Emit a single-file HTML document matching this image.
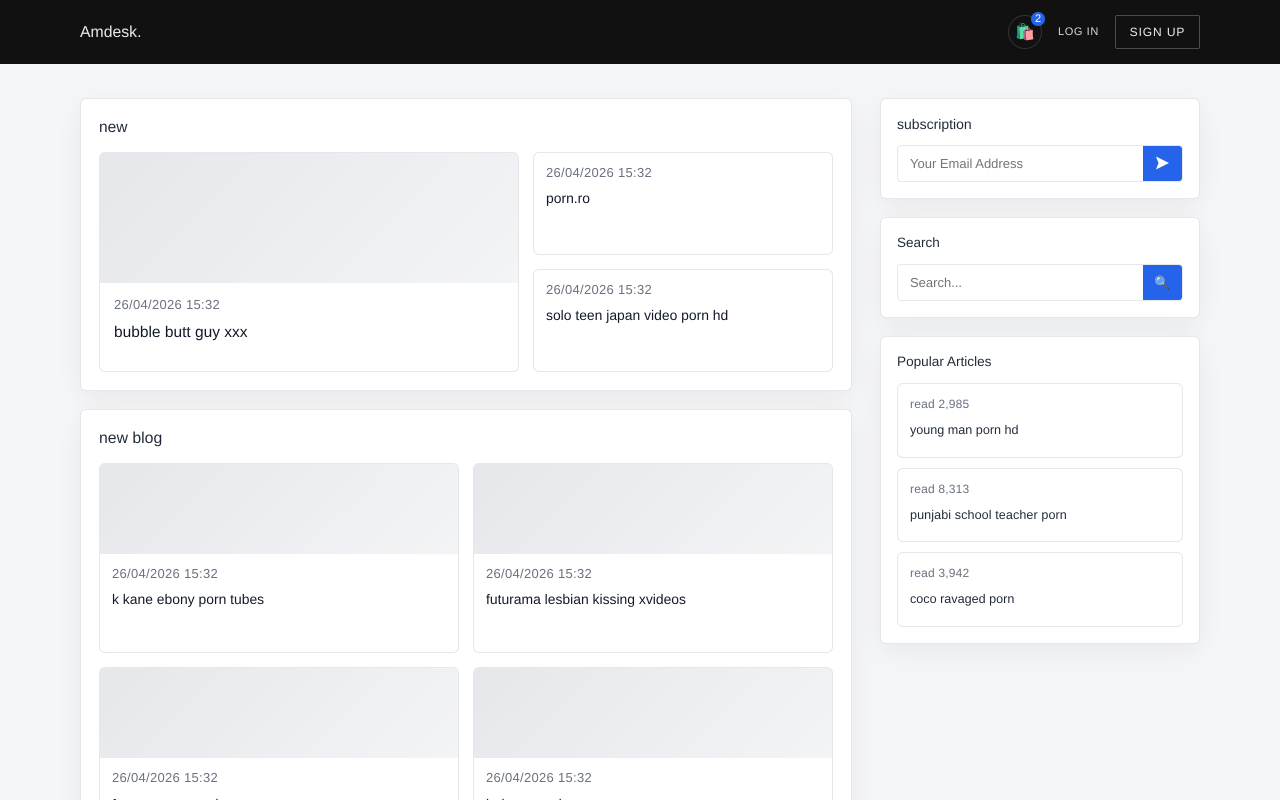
<!DOCTYPE html>
<html lang="en">
<head>
<meta charset="utf-8">
<title>Amdesk.</title>
<style>
*{box-sizing:border-box;margin:0;padding:0}
html,body{width:1280px;height:800px;overflow:hidden;background:#f5f6f8}
body{font-family:"Liberation Sans",Arial,sans-serif;color:#111827;position:relative;text-rendering:geometricPrecision}
.abs{position:absolute}
header{position:absolute;left:0;top:0;width:1280px;height:64px;background:#111}
.t{position:absolute;white-space:nowrap}
.card{position:absolute;background:#fff;border:1px solid #e5e7eb;border-radius:6px;box-shadow:0 8px 28px rgba(17,24,39,.06)}
.item{position:absolute;background:#fff;border:1px solid #e5e7eb;border-radius:6px;overflow:hidden}
.img{position:absolute;left:0;top:0;width:100%;background:linear-gradient(135deg,#e5e7eb,#f3f4f6)}
.d{font-size:13px;line-height:16px;color:#6b7280;letter-spacing:.3px}
.h{font-size:13.900px;line-height:18px;color:#111827}
.r{font-size:12px;line-height:16px;color:#6b7280;letter-spacing:.2px}
.p{font-size:12.600px;line-height:16px;color:#1f2937}
.input{position:absolute;background:#fff;border:1px solid #e5e7eb;border-radius:4px;overflow:hidden}
.input span.ph{position:absolute;left:12px;top:10px;font-size:13px;line-height:16px;color:#757575;white-space:nowrap}
.btn{position:absolute;right:0;top:0;width:39px;height:35px;background:#2563eb}
</style>
</head>
<body>
<header>
  <div class="t" style="left:80px;top:23px;font-size:15.800px;line-height:20px;color:#e5e7eb">Amdesk.</div>
  <div class="abs" style="left:1008px;top:15px;width:34px;height:34px;border:1px solid #333;border-radius:50%;text-align:center;font-size:16px;line-height:34px">🛍️</div>
  <div class="abs" style="left:1031px;top:12px;width:14px;height:14px;border-radius:50%;background:#2563eb;color:#fff;font-size:11px;line-height:14px;text-align:center">2</div>
  <div class="t" style="left:1058px;top:25px;font-size:11px;line-height:14px;letter-spacing:.6px;color:#d1d5db">LOG IN</div>
  <div class="abs" style="left:1115px;top:15px;width:85px;height:34px;border:1px solid #4b4b4b;border-radius:2px;color:#e5e7eb;font-size:12px;line-height:32px;text-align:center;letter-spacing:.9px">SIGN UP</div>
</header>

<div class="card" style="left:80px;top:98px;width:772px;height:293px">
  <div class="t" style="left:18px;top:20px;font-size:15.500px;line-height:18px;color:#1f2937">new</div>
  <div class="item" style="left:18px;top:53px;width:420px;height:220px">
    <div class="img" style="height:130px"></div>
    <div class="t d" style="left:14px;top:144px">26/04/2026 15:32</div>
    <div class="t" style="left:14px;top:170px;font-size:15.500px;line-height:20px">bubble butt guy xxx</div>
  </div>
  <div class="item" style="left:452px;top:53px;width:300px;height:103px">
    <div class="t d" style="left:12px;top:12px">26/04/2026 15:32</div>
    <div class="t h" style="left:12px;top:36px">porn.ro</div>
  </div>
  <div class="item" style="left:452px;top:170px;width:300px;height:103px">
    <div class="t d" style="left:12px;top:12px">26/04/2026 15:32</div>
    <div class="t h" style="left:12px;top:36px">solo teen japan video porn hd</div>
  </div>
</div>

<div class="card" style="left:80px;top:409px;width:772px;height:500px">
  <div class="t" style="left:18px;top:20px;font-size:15.800px;line-height:18px;color:#1f2937">new blog</div>
  <div class="item" style="left:18px;top:53px;width:360px;height:190px">
    <div class="img" style="height:90px"></div>
    <div class="t d" style="left:12px;top:102px">26/04/2026 15:32</div>
    <div class="t h" style="left:12px;top:126px">k kane ebony porn tubes</div>
  </div>
  <div class="item" style="left:392px;top:53px;width:360px;height:190px">
    <div class="img" style="height:90px"></div>
    <div class="t d" style="left:12px;top:102px">26/04/2026 15:32</div>
    <div class="t h" style="left:12px;top:126px">futurama lesbian kissing xvideos</div>
  </div>
  <div class="item" style="left:18px;top:257px;width:360px;height:190px">
    <div class="img" style="height:90px"></div>
    <div class="t d" style="left:12px;top:102px">26/04/2026 15:32</div>
    <div class="t h" style="left:12px;top:127px">free summers exit</div>
  </div>
  <div class="item" style="left:392px;top:257px;width:360px;height:190px">
    <div class="img" style="height:90px"></div>
    <div class="t d" style="left:12px;top:102px">26/04/2026 15:32</div>
    <div class="t h" style="left:12px;top:127px">baby acorn hunt</div>
  </div>
</div>

<div class="card" style="left:880px;top:98px;width:320px;height:101px">
  <div class="t" style="left:16px;top:16px;font-size:14px;line-height:18px;color:#1f2937">subscription</div>
  <div class="input" style="left:16px;top:46px;width:286px;height:37px">
    <span class="ph">Your Email Address</span>
    <div class="btn"><svg class="abs" style="left:12px;top:10px" width="15" height="14" viewBox="0 0 15 14"><path d="M1 .5L14 7L1 13.500L3.500 7Z" fill="#fff"/></svg></div>
  </div>
</div>

<div class="card" style="left:880px;top:217px;width:320px;height:101px">
  <div class="t" style="left:16px;top:16px;font-size:13.500px;line-height:18px;color:#1f2937">Search</div>
  <div class="input" style="left:16px;top:46px;width:286px;height:37px">
    <span class="ph">Search...</span>
    <div class="btn"><div class="abs" style="left:0;top:0;width:39px;height:35px;text-align:center;font-size:13px;line-height:35px">🔍</div></div>
  </div>
</div>

<div class="card" style="left:880px;top:336px;width:320px;height:308px">
  <div class="t" style="left:16px;top:16px;font-size:13.600px;line-height:18px;color:#1f2937">Popular Articles</div>
  <div class="item" style="left:16px;top:46px;width:286px;height:75px">
    <div class="t r" style="left:12px;top:12px">read 2,985</div>
    <div class="t p" style="left:12px;top:38px">young man porn hd</div>
  </div>
  <div class="item" style="left:16px;top:131px;width:286px;height:74px">
    <div class="t r" style="left:12px;top:12px">read 8,313</div>
    <div class="t p" style="left:12px;top:38px;letter-spacing:.08px">punjabi school teacher porn</div>
  </div>
  <div class="item" style="left:16px;top:215px;width:286px;height:75px">
    <div class="t r" style="left:12px;top:12px">read 3,942</div>
    <div class="t p" style="left:12px;top:38px">coco ravaged porn</div>
  </div>
</div>
</body>
</html>
